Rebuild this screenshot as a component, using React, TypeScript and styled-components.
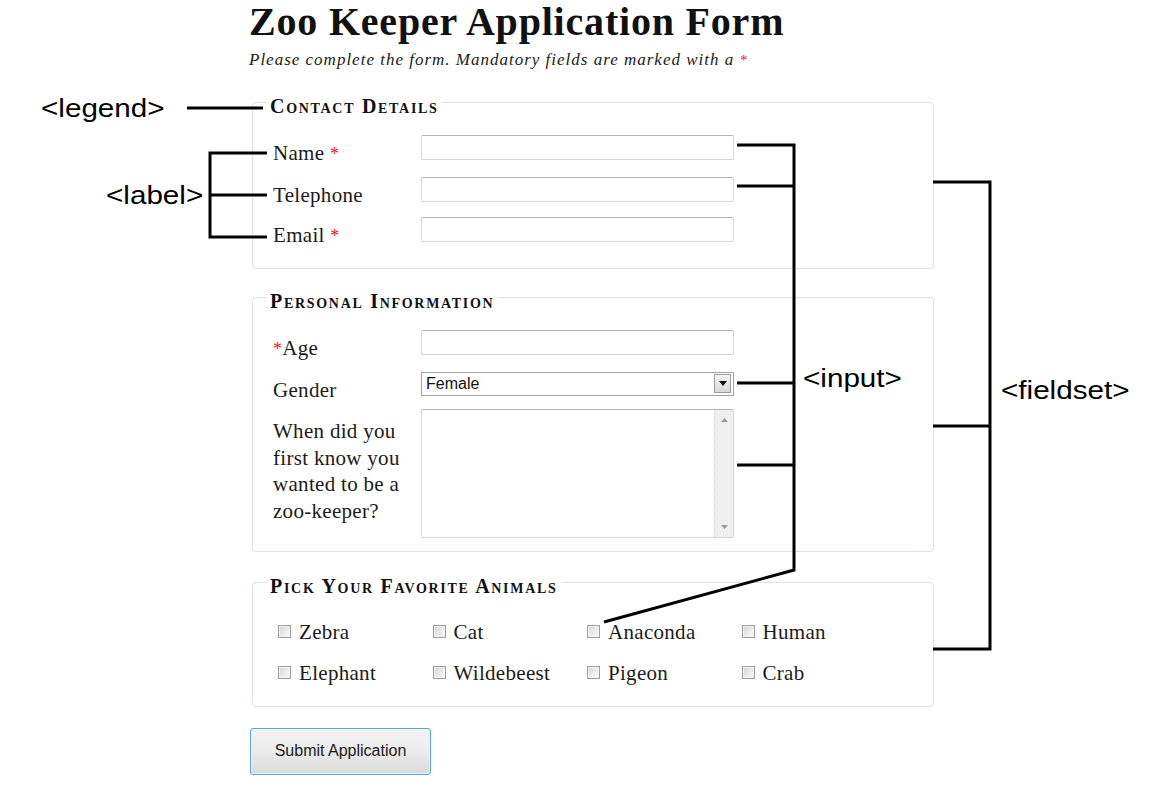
import React from 'react';
import styled, { createGlobalStyle } from 'styled-components';

const GlobalStyle = createGlobalStyle`
  html, body { margin: 0; padding: 0; background: #ffffff; }
  body { font-family: "Liberation Serif", "Times New Roman", serif; color: #1b1b1b; }
  * { box-sizing: border-box; }
`;

const Page = styled.div`
  position: relative;
  width: 1176px;
  height: 789px;
  overflow: hidden;
`;

const Main = styled.main`
  width: 690px;
  margin-left: 249px;
  display: flex;
  flex-direction: column;
  align-items: flex-start;
`;

const Title = styled.h1`
  margin: 0;
  font-family: "Liberation Serif", "Times New Roman", serif;
  font-size: 40px;
  line-height: 44px;
  font-weight: 700;
  letter-spacing: 0.8px;
  color: #111;
`;

const Intro = styled.p`
  margin: 6px 0 0;
  font-style: italic;
  font-size: 17px;
  line-height: 20px;
  letter-spacing: 1px;
`;

const Star = styled.span`
  color: #e4152b;
  font-size: 0.85em;
`;

const Fieldset = styled.fieldset<{ $mt: number; $pt?: number; $pb?: number }>`
  margin: ${(p) => p.$mt}px 0 0 3px;
  width: 682px;
  min-width: 0;
  border: 1px solid #dde2e4;
  border-radius: 4px;
  padding: ${(p) => p.$pt ?? 18}px 20px ${(p) => p.$pb ?? 18}px 20px;
`;

const Legend = styled.legend`
  margin-left: -6px;
  padding: 9px 3px 1px;
  font-size: 20px;
  line-height: 20px;
  font-weight: 700;
  font-variant: small-caps;
  letter-spacing: 1.7px;
  color: #111;
`;

const Rows = styled.div`
  display: flex;
  flex-direction: column;
  gap: 9px;
`;

const FieldRow = styled.div<{ $mt?: number }>`
  display: grid;
  grid-template-columns: 148px 313px;
  align-items: start;
  margin-top: ${(p) => p.$mt ?? 0}px;
`;

const FieldLabel = styled.label<{ $pt?: number }>`
  font-size: 21px;
  line-height: 26.5px;
  padding-top: ${(p) => p.$pt ?? 5}px;
  letter-spacing: 0.3px;
`;

const TextInput = styled.input`
  display: block;
  width: 313px;
  height: 25px;
  margin: 0;
  padding: 2px 4px;
  border: 1px solid #d6d6d6;
  border-top-color: #b4b4b4;
  border-radius: 2px;
  background: #fff;
  font: 16px "Liberation Sans", Arial, sans-serif;
`;

const SelectWrap = styled.div`
  position: relative;
  width: 313px;
  height: 24px;
`;

const Select = styled.select`
  appearance: none;
  display: block;
  width: 100%;
  height: 100%;
  margin: 0;
  padding: 0 24px 0 4px;
  border: 1px solid #a4a4a4;
  border-radius: 0;
  background: #fff;
  color: #111;
  font: 16px "Liberation Sans", Arial, sans-serif;
`;

const DropButton = styled.span`
  position: absolute;
  top: 2px;
  right: 3px;
  width: 17px;
  height: 19px;
  border: 1px solid #9c9c9c;
  background: linear-gradient(#f6f6f6, #d9d9d9);
  display: flex;
  align-items: center;
  justify-content: center;
  pointer-events: none;
`;

const AreaWrap = styled.div`
  position: relative;
  width: 313px;
  height: 129px;
`;

const TextArea = styled.textarea`
  display: block;
  width: 100%;
  height: 100%;
  margin: 0;
  padding: 3px 24px 3px 4px;
  resize: none;
  overflow: hidden;
  border: 1px solid #d6d6d6;
  border-top-color: #b4b4b4;
  border-radius: 2px;
  background: #fff;
  font: 16px "Liberation Sans", Arial, sans-serif;
`;

const ScrollTrack = styled.div`
  position: absolute;
  top: 1px;
  right: 1px;
  bottom: 1px;
  width: 19px;
  background: #efefef;
  border-left: 1px dotted #d2d2d2;
  display: flex;
  flex-direction: column;
  justify-content: space-between;
  align-items: center;
  padding: 8px 0 8px;
  pointer-events: none;
`;

const AnimalGrid = styled.div`
  display: grid;
  grid-template-columns: repeat(4, 154.5px);
  row-gap: 14.5px;
  margin-left: 5px;
`;

const AnimalItem = styled.label`
  display: flex;
  align-items: center;
  gap: 8px;
  font-size: 21px;
  line-height: 26.5px;
  letter-spacing: 0.3px;
`;

const CheckBox = styled.input`
  appearance: none;
  margin: 0;
  width: 13px;
  height: 13px;
  border: 1px solid #9d9d9d;
  border-radius: 0;
  background: linear-gradient(135deg, #d2d2d2 0%, #ececec 55%, #fbfbfb 100%);
  box-shadow: inset 0 0 0 1px #f4f4f4;
  flex: none;
`;

const SubmitButton = styled.button`
  margin: 21px 0 0 1px;
  width: 181px;
  height: 47px;
  border: 1px solid #5aa8db;
  border-radius: 3px;
  background: linear-gradient(#f4f4f4 0%, #ebebeb 50%, #dadada 100%);
  box-shadow: inset 0 0 0 1px #e8f2f8;
  color: #1a1a1a;
  font: 16px "Liberation Sans", Arial, sans-serif;
  padding: 0;
`;

const Overlay = styled.svg`
  position: absolute;
  left: 0;
  top: 0;
  pointer-events: none;
`;

const Tag = styled.span<{ $x: number; $y: number }>`
  position: absolute;
  left: ${(p) => p.$x}px;
  top: ${(p) => p.$y}px;
  font-family: "Liberation Sans", Arial, sans-serif;
  font-size: 26px;
  line-height: 30px;
  color: #000;
  transform: scaleX(1.14);
  transform-origin: left center;
  white-space: nowrap;
`;

const animals = [
  'Zebra',
  'Cat',
  'Anaconda',
  'Human',
  'Elephant',
  'Wildebeest',
  'Pigeon',
  'Crab',
];

export default function App() {
  return (
    <Page>
      <GlobalStyle />
      <Main>
        <Title>Zoo Keeper Application Form</Title>
        <Intro>
          Please complete the form. Mandatory fields are marked with a <Star>*</Star>
        </Intro>

        <Fieldset $mt={17}>
          <Legend>Contact Details</Legend>
          <Rows>
            <FieldRow>
              <FieldLabel htmlFor="name">
                Name <Star>*</Star>
              </FieldLabel>
              <TextInput id="name" type="text" />
            </FieldRow>
            <FieldRow>
              <FieldLabel htmlFor="tel">Telephone</FieldLabel>
              <TextInput id="tel" type="text" />
            </FieldRow>
            <FieldRow>
              <FieldLabel htmlFor="email">
                Email <Star>*</Star>
              </FieldLabel>
              <TextInput id="email" type="text" />
            </FieldRow>
          </Rows>
        </Fieldset>

        <Fieldset $mt={13.5} $pb={12.5}>
          <Legend>Personal Information</Legend>
          <Rows>
            <FieldRow>
              <FieldLabel htmlFor="age">
                <Star>*</Star>Age
              </FieldLabel>
              <TextInput id="age" type="text" />
            </FieldRow>
            <FieldRow>
              <FieldLabel htmlFor="gender">Gender</FieldLabel>
              <SelectWrap>
                <Select id="gender" defaultValue="Female">
                  <option>Female</option>
                  <option>Male</option>
                </Select>
                <DropButton>
                  <svg width="8" height="5" viewBox="0 0 8 5">
                    <path d="M0 0 H8 L4 5 Z" fill="#111" />
                  </svg>
                </DropButton>
              </SelectWrap>
            </FieldRow>
            <FieldRow $mt={-3}>
              <FieldLabel htmlFor="when" $pt={9}>
                When did you
                <br />
                first know you
                <br />
                wanted to be a
                <br />
                zoo-keeper?
              </FieldLabel>
              <AreaWrap>
                <TextArea id="when" />
                <ScrollTrack>
                  <svg width="7" height="4" viewBox="0 0 7 4">
                    <path d="M0 4 H7 L3.5 0 Z" fill="#9a9a9a" />
                  </svg>
                  <svg width="7" height="4" viewBox="0 0 7 4">
                    <path d="M0 0 H7 L3.5 4 Z" fill="#9a9a9a" />
                  </svg>
                </ScrollTrack>
              </AreaWrap>
            </FieldRow>
          </Rows>
        </Fieldset>

        <Fieldset $mt={15.5} $pt={21.5} $pb={19.5}>
          <Legend>Pick Your Favorite Animals</Legend>
          <AnimalGrid>
            {animals.map((a) => (
              <AnimalItem key={a}>
                <CheckBox type="checkbox" />
                {a}
              </AnimalItem>
            ))}
          </AnimalGrid>
        </Fieldset>

        <SubmitButton type="button">Submit Application</SubmitButton>
      </Main>

      <Overlay width="1176" height="789" viewBox="0 0 1176 789">
        <g stroke="#000" strokeWidth="3" fill="none" strokeLinecap="butt" strokeLinejoin="miter">
          <path d="M187 108 H263" />
          <path d="M267 153 H210 V237 H267" />
          <path d="M210 195 H267" />
          <path d="M737 145 H794 V570 L604 622" />
          <path d="M737 186 H794" />
          <path d="M737 383 H794" />
          <path d="M737 465 H794" />
          <path d="M933 182 H990 V649 H933" />
          <path d="M933 426 H990" />
        </g>
      </Overlay>
      <Tag $x={41} $y={93}>&lt;legend&gt;</Tag>
      <Tag $x={106} $y={180}>&lt;label&gt;</Tag>
      <Tag $x={803} $y={363}>&lt;input&gt;</Tag>
      <Tag $x={1001} $y={375}>&lt;fieldset&gt;</Tag>
    </Page>
  );
}
